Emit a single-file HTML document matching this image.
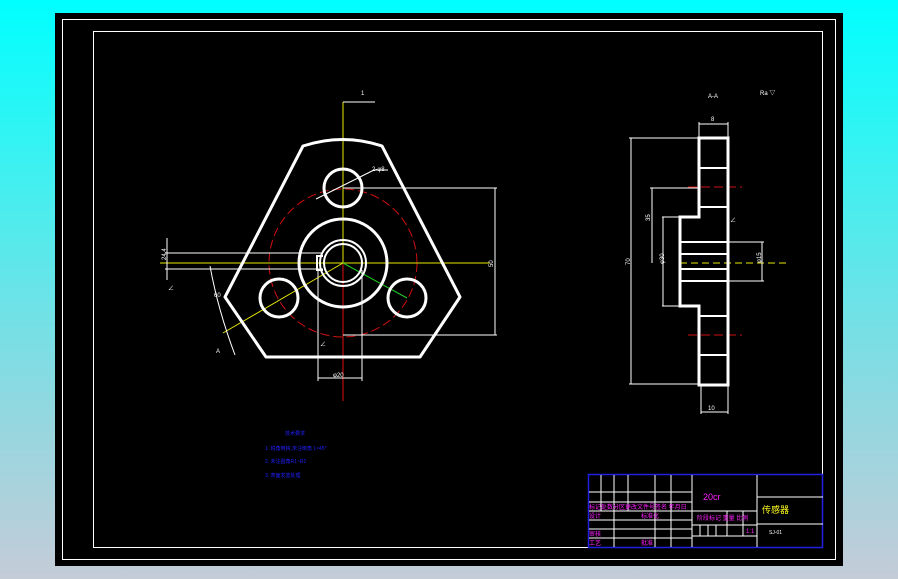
<!DOCTYPE html>
<html><head><meta charset="utf-8"><style>
html,body{margin:0;padding:0;width:898px;height:579px;overflow:hidden;background:linear-gradient(#00ffff 0%,#40f0f0 30%,#90d8e0 70%,#c4ccd8 100%);}
svg{position:absolute;left:0;top:0}
text{font-family:"Liberation Sans","Noto Sans CJK SC",sans-serif}
</style></head><body>
<svg width="898" height="579" viewBox="0 0 898 579">
<rect x="55" y="13" width="788" height="553" fill="#000"/>
<rect x="62.5" y="19.5" width="773" height="540" fill="none" stroke="#fff" stroke-width="1"/>
<rect x="93.5" y="31.5" width="729" height="516" fill="none" stroke="#fff" stroke-width="1"/>

<!-- left view -->
<g fill="none">
<circle cx="343" cy="263" r="74" stroke="#d01010" stroke-width="1" stroke-dasharray="9,4"/>
<line x1="343" y1="263" x2="343" y2="401" stroke="#e01010"/>
<line x1="343" y1="102" x2="343" y2="263" stroke="#e8e800"/>
<line x1="160" y1="263" x2="490" y2="263" stroke="#e8e800"/>
<line x1="343" y1="263" x2="223" y2="333" stroke="#e8e800"/>
<line x1="343" y1="263" x2="407" y2="298" stroke="#20d020"/>
<line x1="343" y1="102" x2="375" y2="102" stroke="#fff"/>
<path d="M303,146 Q343,133 382,146 L460,297 L420,357 L266,357 L225,297 Z" stroke="#fff" stroke-width="3" stroke-linejoin="round"/>
<circle cx="343" cy="188" r="19" stroke="#fff" stroke-width="3"/>
<circle cx="279" cy="298" r="19" stroke="#fff" stroke-width="3"/>
<circle cx="407" cy="298" r="19" stroke="#fff" stroke-width="3"/>
<circle cx="343" cy="263" r="44" stroke="#fff" stroke-width="3"/>
<circle cx="343" cy="263" r="23" stroke="#fff" stroke-width="2"/>
<circle cx="343" cy="263" r="19" stroke="#fff" stroke-width="2"/>
<path d="M323,256 L317,256 L317,270 L323,270" stroke="#fff" stroke-width="2"/>
<g stroke="#fff" stroke-width="1">
<line x1="343" y1="188" x2="497" y2="188"/><line x1="343" y1="335" x2="497" y2="335"/>
<line x1="495" y1="188" x2="495" y2="335"/>
<line x1="165" y1="253" x2="323" y2="253"/><line x1="165" y1="269" x2="323" y2="269"/>
<line x1="167" y1="238" x2="167" y2="280"/>
<line x1="318" y1="270" x2="318" y2="381"/><line x1="362" y1="270" x2="362" y2="381"/>
<line x1="318" y1="378" x2="362" y2="378"/>
<line x1="316" y1="199" x2="374" y2="170"/><line x1="374" y1="170" x2="388" y2="170"/>
<path d="M210,266 Q218,310 235,355"/>
</g>
</g>
<g fill="#fff" font-size="6">
<text x="361" y="95">1</text>
<text x="372" y="171">2-φ8</text>
<text x="486" y="266" transform="rotate(-90 490 263)">50</text>
<text x="333" y="377">φ20</text>
<text x="214" y="297">60</text>
<text x="216" y="353">A</text>
<text x="320" y="346">∠</text>
<text x="168" y="290">∠</text>
<text x="160" y="262" transform="rotate(-90 162 258)">24.4</text>
</g>

<!-- right view -->
<g fill="none">
<line x1="688" y1="187" x2="742" y2="187" stroke="#d01010" stroke-dasharray="9,4"/>
<line x1="688" y1="335" x2="742" y2="335" stroke="#d01010" stroke-dasharray="9,4"/>
<line x1="680" y1="263" x2="790" y2="263" stroke="#e8e800" stroke-dasharray="7,4"/>
<path d="M699,138 L728,138 L728,385 L699,385 L699,306 L680,306 L680,217 L699,217 Z" stroke="#fff" stroke-width="3"/>
<g stroke="#fff" stroke-width="2">
<line x1="699" y1="138" x2="699" y2="217"/><line x1="699" y1="306" x2="699" y2="385"/>
<line x1="699" y1="168" x2="728" y2="168"/><line x1="699" y1="207" x2="728" y2="207"/>
<line x1="680" y1="242" x2="728" y2="242"/><line x1="680" y1="254" x2="728" y2="254"/>
<line x1="680" y1="269" x2="728" y2="269"/><line x1="680" y1="281" x2="728" y2="281"/>
<line x1="699" y1="316" x2="728" y2="316"/><line x1="699" y1="355" x2="728" y2="355"/>
</g>
<g stroke="#fff" stroke-width="1">
<line x1="629" y1="138" x2="699" y2="138"/><line x1="629" y1="384" x2="699" y2="384"/>
<line x1="631" y1="138" x2="631" y2="384"/>
<line x1="650" y1="188" x2="699" y2="188"/><line x1="652" y1="188" x2="652" y2="263"/>
<line x1="662" y1="217" x2="680" y2="217"/><line x1="662" y1="306" x2="680" y2="306"/><line x1="663" y1="217" x2="663" y2="306"/>
<line x1="728" y1="242" x2="764" y2="242"/><line x1="728" y1="281" x2="764" y2="281"/><line x1="762" y1="242" x2="762" y2="281"/>
<line x1="699" y1="122" x2="699" y2="138"/><line x1="728" y1="122" x2="728" y2="138"/><line x1="699" y1="124" x2="728" y2="124"/>
<line x1="701" y1="385" x2="701" y2="414"/><line x1="728" y1="385" x2="728" y2="414"/><line x1="701" y1="412" x2="728" y2="412"/>
</g>
</g>
<g fill="#fff" font-size="6">
<text x="711" y="121">8</text>
<text x="708" y="98">A-A</text>
<text x="760" y="95">Ra ▽</text>
<text x="708" y="410">10</text>
<text x="625" y="266" transform="rotate(-90 627 263)">70</text>
<text x="645" y="222" transform="rotate(-90 647 219)">35</text>
<text x="659" y="265" transform="rotate(-90 661 262)">φ30</text>
<text x="756" y="264" transform="rotate(-90 758 261)">φ15</text>
<text x="730" y="222">∠</text>
</g>

<!-- notes -->
<g fill="#2020ff" font-size="5">
<text x="285" y="435">技术要求</text>
<text x="265" y="450">1. 锐角倒钝,未注倒角 1×45°</text>
<text x="265" y="463">2. 未注圆角R1~R2</text>
<text x="265" y="477">3. 表面发蓝处理</text>
</g>

<!-- title block -->
<rect x="588.5" y="474.5" width="234" height="73" fill="none" stroke="#2020e0" stroke-width="1.5"/>
<g stroke="#fff" stroke-width="1" fill="none">
<line x1="601" y1="475" x2="601" y2="511"/><line x1="614" y1="475" x2="614" y2="547"/>
<line x1="628" y1="475" x2="628" y2="511"/><line x1="655" y1="475" x2="655" y2="547"/>
<line x1="671" y1="475" x2="671" y2="547"/><line x1="692" y1="475" x2="692" y2="547"/>
<line x1="757" y1="475" x2="757" y2="547"/>
<line x1="589" y1="492" x2="692" y2="492"/><line x1="589" y1="502" x2="692" y2="502"/>
<line x1="589" y1="511" x2="692" y2="511"/><line x1="589" y1="520" x2="692" y2="520"/>
<line x1="589" y1="529" x2="692" y2="529"/><line x1="589" y1="538" x2="692" y2="538"/>
<line x1="692" y1="511" x2="757" y2="511"/><line x1="692" y1="525" x2="757" y2="525"/><line x1="692" y1="536" x2="757" y2="536"/>
<line x1="727" y1="511" x2="727" y2="536"/><line x1="743" y1="511" x2="743" y2="536"/>
<line x1="700" y1="525" x2="700" y2="536"/><line x1="708" y1="525" x2="708" y2="536"/><line x1="716" y1="525" x2="716" y2="536"/>
<line x1="757" y1="497" x2="823" y2="497"/><line x1="757" y1="524" x2="823" y2="524"/>
</g>
<g fill="#ff20ff" font-size="6">
<text x="589" y="509">标记处数分区更改文件号签名 年月日</text>
<text x="589" y="518">设计</text>
<text x="641" y="518">标准化</text>
<text x="589" y="536">审核</text>
<text x="589" y="545">工艺</text>
<text x="641" y="545">批准</text>
<text x="697" y="520">阶段标记 重量 比例</text>
<text x="746" y="533">1:1</text>
<text x="703" y="500" font-size="9">20cr</text>
</g>
<text x="762" y="513" fill="#ffff20" font-size="9">传感器</text>
<text x="769" y="534" fill="#fff" font-size="5">SJ-01</text>
</svg>
</body></html>
